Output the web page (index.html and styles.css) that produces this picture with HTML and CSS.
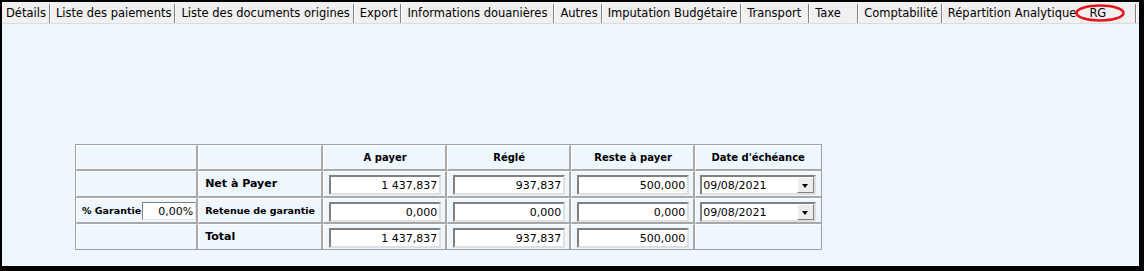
FILE: index.html
```html
<!DOCTYPE html>
<html lang="fr">
<head>
  <meta charset="UTF-8" />
  <title>RG</title>
  <link rel="stylesheet" href="styles.css">
</head>
<body>
  <div class="cadre">
    <div class="onglets">
      <div class="onglet premier">Détails</div>
      <div class="onglet">Liste des paiements</div>
      <div class="onglet">Liste des documents origines</div>
      <div class="onglet">Export</div>
      <div class="onglet douane">Informations douanières</div>
      <div class="onglet">Autres</div>
      <div class="onglet">Imputation Budgétaire</div>
      <div class="onglet transport">Transport</div>
      <div class="onglet taxe">Taxe</div>
      <div class="onglet">Comptabilité</div>
      <div class="onglet analytique">Répartition Analytique</div>
      <div class="onglet actif">RG
        <svg class="cercle" width="54" height="22" viewBox="0 0 54 22"><ellipse cx="25" cy="11" rx="23.5" ry="7.5" fill="none" stroke="#e8141c" stroke-width="2.5"/></svg>
      </div>
    </div>

    <div class="contenu">
      <table class="rg">
        <tr class="entete">
          <td class="vide"></td>
          <td></td>
          <td>A payer</td>
          <td>Réglé</td>
          <td>Reste à payer</td>
          <td class="date">Date d'échéance</td>
        </tr>
        <tr class="ligne">
          <td class="vide"></td>
          <td class="libelle">Net à Payer</td>
          <td><input class="montant" value="1 437,837"></td>
          <td><input class="montant" value="937,837"></td>
          <td><input class="montant" value="500,000"></td>
          <td class="date"><div class="liste"><span>09/08/2021</span><b class="fleche"></b></div></td>
        </tr>
        <tr class="ligne2">
          <td class="vide garantie"><label>% Garantie</label><input class="pct" value="0,00%"></td>
          <td class="libelle petit">Retenue de garantie</td>
          <td><input class="montant" value="0,000"></td>
          <td><input class="montant" value="0,000"></td>
          <td><input class="montant" value="0,000"></td>
          <td class="date"><div class="liste"><span>09/08/2021</span><b class="fleche"></b></div></td>
        </tr>
        <tr class="total">
          <td class="vide"></td>
          <td class="libelle">Total</td>
          <td><input class="montant" value="1 437,837"></td>
          <td><input class="montant" value="937,837"></td>
          <td><input class="montant" value="500,000"></td>
          <td class="date"></td>
        </tr>
      </table>
    </div>
  </div>
</body>
</html>
```

FILE: styles.css
```css
body {
  margin: 0;
  background: #000;
  font-family: "DejaVu Sans", Verdana, sans-serif;
  font-size: 11px;
}
.cadre {
  margin: 2px 5px 0 2px;
  height: 264px;
  background: #eef6fe;
}
.onglets {
  display: flex;
  height: 21px;
  background: #f0f0f0;
  border-bottom: 1px solid #dcdcdc;
}
.onglet {
  position: relative;
  padding: 0 3px 0 6px;
  margin-top: 2px;
  height: 19px;
  line-height: 19px;
  font-size: 11.5px;
  color: #000;
  border-right: 1px solid #808080;
  box-shadow: 1px 0 0 #fff;
  white-space: nowrap;
}
.premier {
  padding-left: 4px;
}
.douane {
  padding-right: 6px;
}
.transport {
  padding-right: 7px;
}
.taxe {
  width: 39px;
}
.analytique {
  border-right: none;
  box-shadow: none;
}
.actif {
  width: 43px;
  padding-left: 10px;
}
.cercle {
  position: absolute;
  left: -4px;
  top: -2px;
}
.contenu {
  padding: 120px 0 0 73px;
}
.rg {
  border: 1px solid #a0a0a0;
  border-spacing: 0;
}
.rg td {
  border-left: 1px solid #fff;
  border-top: 1px solid #fff;
  border-right: 2px solid #a8a8a8;
  border-bottom: 2px solid #a8a8a8;
  padding: 3px 4px 0 5px;
  width: 112px;
  white-space: nowrap;
  vertical-align: top;
}
.rg td.vide {
  width: 114px;
  padding-left: 5px;
  padding-right: 0;
}
.rg td.date {
  border-right: none;
  width: 116px;
  padding-left: 4px;
  padding-right: 5px;
}
.entete {
  height: 26px;
}
.ligne {
  height: 27px;
}
.ligne2 {
  height: 26px;
}
.total {
  height: 25px;
}
.rg .entete td {
  font-weight: bold;
  text-align: center;
  font-size: 10px;
  vertical-align: middle;
  padding-top: 0;
}
.rg .total td {
  border-bottom: none;
}
.rg td.libelle {
  font-weight: bold;
  font-size: 11px;
  padding-top: 5px;
  padding-left: 6px;
}
.rg td.petit {
  font-size: 9.5px;
  padding-top: 6px;
}
.montant {
  box-sizing: border-box;
  width: 112px;
  height: 20px;
  border: 2px solid;
  border-color: #808080 #e0e0e0 #e0e0e0 #808080;
  background: #fff;
  text-align: right;
  font-family: "DejaVu Sans", Verdana, sans-serif;
  font-size: 11px;
  padding: 0 2px;
  margin: 0;
  display: block;
}
.garantie {
  font-weight: bold;
  font-size: 9.5px;
}
.garantie label {
  margin-right: 1px;
}
.pct {
  box-sizing: border-box;
  width: 54px;
  height: 18px;
  border: 1px solid;
  border-color: #808080 #e0e0e0 #e0e0e0 #808080;
  text-align: right;
  font-family: "DejaVu Sans", Verdana, sans-serif;
  font-size: 11px;
  padding: 0 2px;
  vertical-align: middle;
}
.liste {
  box-sizing: border-box;
  display: flex;
  align-items: center;
  justify-content: space-between;
  width: 116px;
  height: 20px;
  border: 2px solid;
  border-color: #808080 #e0e0e0 #e0e0e0 #808080;
  background: #fff;
  padding-left: 1px;
  font-size: 11px;
}
.fleche {
  box-sizing: border-box;
  width: 17px;
  height: 16px;
  background: #ececec;
  border: 1px solid;
  border-color: #fff #808080 #808080 #fff;
  position: relative;
}
.fleche::after {
  content: "";
  position: absolute;
  left: 4px;
  top: 6px;
  border-left: 3.5px solid transparent;
  border-right: 3.5px solid transparent;
  border-top: 4px solid #000;
}
```
